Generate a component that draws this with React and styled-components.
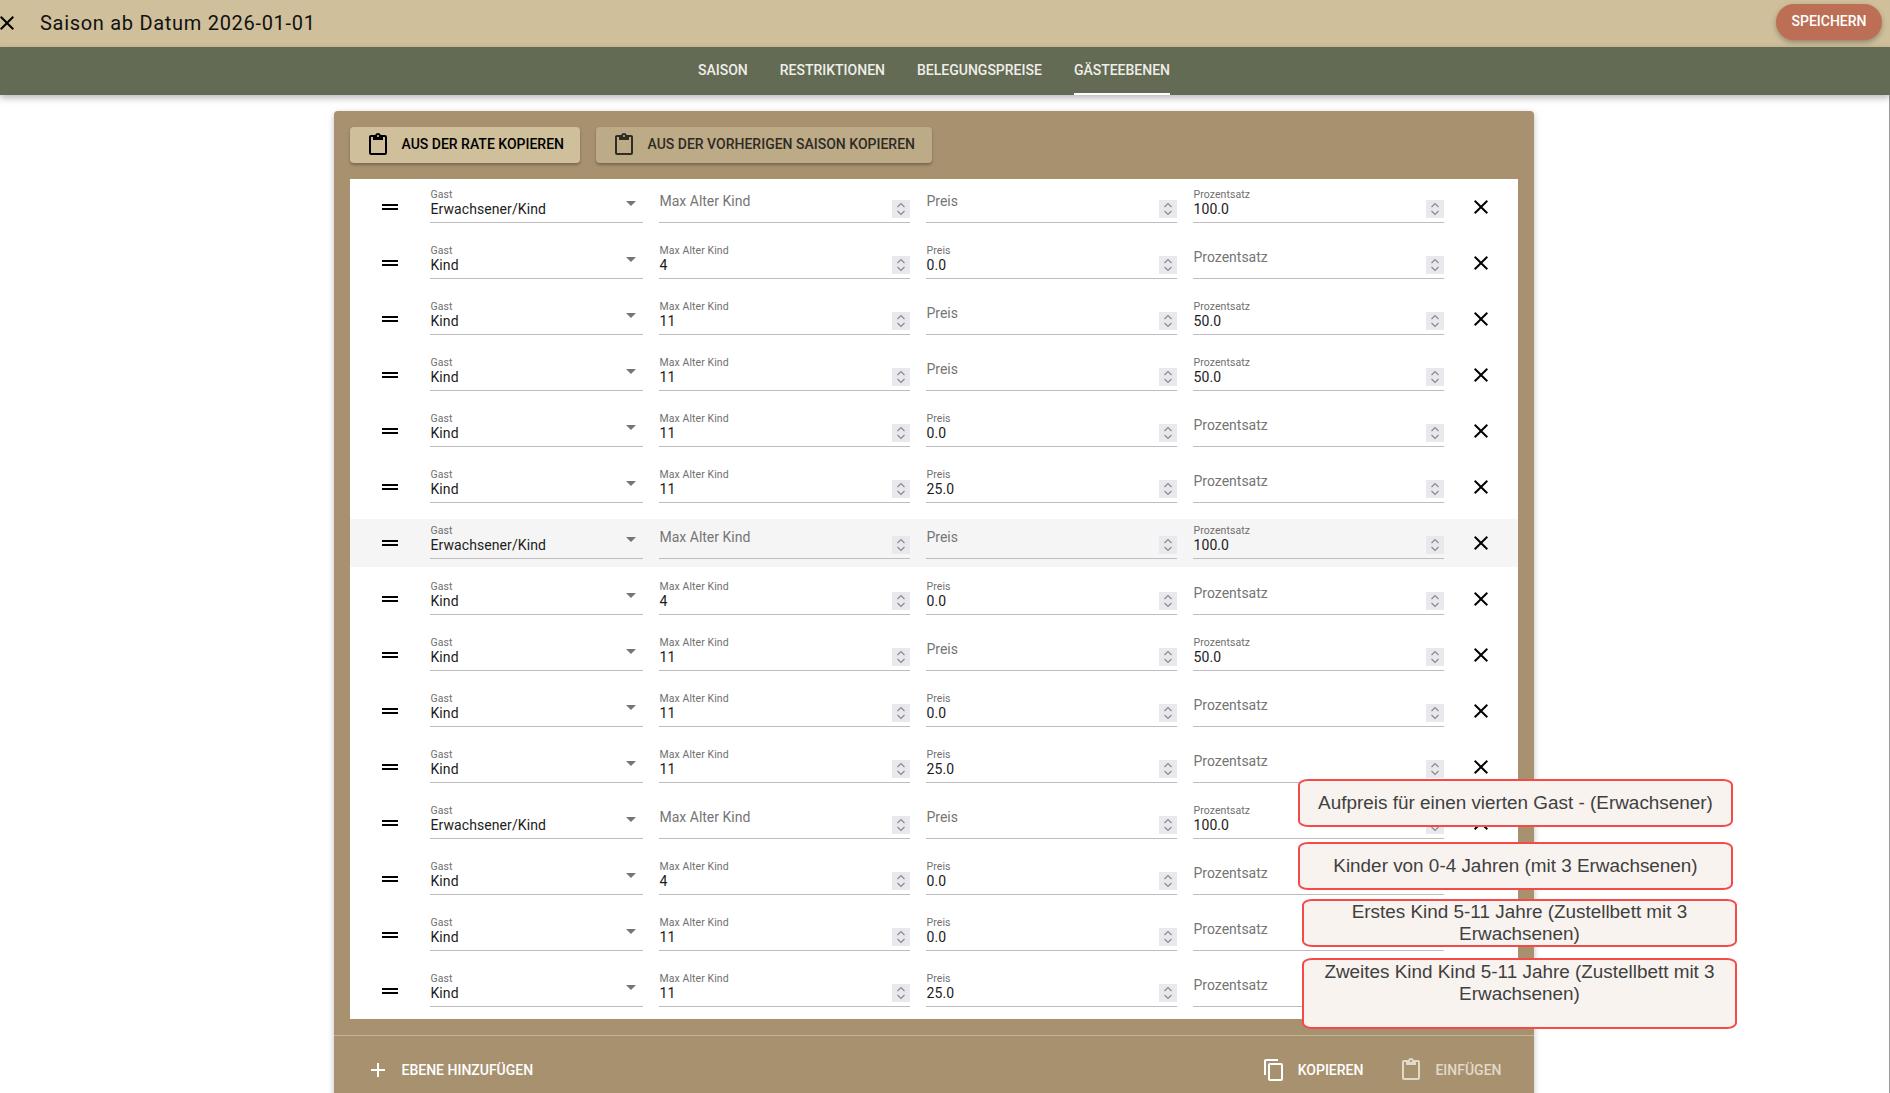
import React from "react";
import styled, { createGlobalStyle } from "styled-components";

const GlobalStyle = createGlobalStyle`
  html, body {
    margin: 0;
    padding: 0;
    height: 100%;
    overflow: hidden;
    background: #fff;
    font-family: Roboto, "Liberation Sans", sans-serif;
  }
`;

const Page = styled.div`
  height: 1093px;
  display: flex;
  flex-direction: column;
  overflow: hidden;
  position: relative;
`;

const Header = styled.header`
  height: 47px;
  flex: none;
  background: #cfbf9b;
  display: flex;
  align-items: center;
  justify-content: space-between;
  padding: 0 8px 0 0;
`;

const HeaderLeft = styled.div`
  display: flex;
  align-items: center;
  margin-bottom: 1px;
`;

const CloseTop = styled.span`
  width: 24px;
  height: 24px;
  margin-left: -5px;
  margin-right: 21px;
  display: flex;
  color: #000;
`;

const Title = styled.h1`
  margin: 0;
  font-size: 20px;
  font-weight: 400;
  letter-spacing: 0.7px;
  color: #111;
`;

const SaveButton = styled.button`
  width: 106px;
  height: 36px;
  margin-bottom: 3px;
  padding: 0 0 2px;
  border: none;
  border-radius: 18px;
  background: #bd6f55;
  color: #fff;
  font: 500 14px Roboto, sans-serif;
  box-shadow: 0 3px 5px -1px rgba(0, 0, 0, 0.2), 0 2px 6px 0 rgba(0, 0, 0, 0.14);
`;

const TabBar = styled.nav`
  height: 48px;
  flex: none;
  background: #636b55;
  display: flex;
  justify-content: center;
  gap: 32px;
  padding-right: 22px;
  box-shadow: 0 3px 7px rgba(0, 0, 0, 0.28);
  position: relative;
  z-index: 1;
`;

const Tab = styled.div`
  height: 48px;
  box-sizing: border-box;
  display: flex;
  align-items: center;
  font-size: 14px;
  font-weight: 500;
  color: #f0eee8;
  border-bottom: 2px solid ${(p) => (p.$active ? "#fff" : "transparent")};
`;

const Content = styled.main`
  flex: 1;
  min-height: 0;
  padding: 16px 22px 0 0;
  border-right: 1px solid #9a9a9a;
  box-sizing: border-box;
  width: 1890px;
  position: relative;
`;

const Panel = styled.section`
  width: 1200px;
  margin: 0 auto;
  padding: 16px 0 0;
  background: #a8916f;
  border-radius: 4px 4px 0 0;
  box-shadow: 0 2px 6px rgba(0, 0, 0, 0.25);
`;

const TopActions = styled.div`
  display: flex;
  gap: 16px;
  padding: 0 16px;
  height: 52px;
`;

const CopyButton = styled.button`
  height: 36px;
  border: none;
  border-radius: 4px;
  display: flex;
  align-items: center;
  gap: 12px;
  padding: 0 16px 1px;
  width: ${(p) => p.$w}px;
  background: ${(p) => (p.$muted ? "#bdab88" : "#cfbf9b")};
  color: ${(p) => (p.$muted ? "#2f2b25" : "#000")};
  font: 500 14px Roboto, sans-serif;
  white-space: nowrap;
  box-shadow: 0 2px 3px rgba(0, 0, 0, 0.28);
`;

const CopyLabel = styled.span`
  position: relative;
  top: -1px;
`;

const Card = styled.div`
  margin: 0 16px;
  background: #fff;
  border-radius: 4px;
`;

const Row = styled.div`
  height: 56px;
  display: flex;
  background: ${(p) => (p.$hover ? "linear-gradient(#fff 4px, #f5f5f5 4px, #f5f5f5 52px, #fff 52px)" : "#fff")};
`;

const Handle = styled.div`
  width: 80px;
  flex: none;
  display: flex;
  justify-content: center;
  padding-top: 16px;
  box-sizing: border-box;
  color: #000;
`;

const Field = styled.div`
  width: ${(p) => p.$w}px;
  flex: none;
  margin-right: 16px;
  height: 44px;
  box-sizing: border-box;
  border-bottom: 1.5px solid #bdbdbd;
  position: relative;
`;

const Label = styled.div`
  position: absolute;
  left: 1px;
  top: 10px;
  font-size: 10.5px;
  line-height: 12px;
  letter-spacing: 0.08px;
  color: #6f6f6f;
`;

const Value = styled.div`
  position: absolute;
  left: 1px;
  top: 21px;
  font-size: 14px;
  line-height: 18px;
  letter-spacing: 0.08px;
  color: #1c1c1c;
`;

const Placeholder = styled.div`
  position: absolute;
  left: 1px;
  top: 13px;
  font-size: 14px;
  line-height: 18px;
  color: #757575;
`;

const Arrow = styled.span`
  position: absolute;
  right: 7px;
  top: 22px;
  width: 0;
  height: 0;
  border-left: 5px solid transparent;
  border-right: 5px solid transparent;
  border-top: 5px solid #757575;
`;

const Spinner = styled.span`
  position: absolute;
  right: 0;
  top: 21px;
  width: 18px;
  height: 18px;
  background: #e9e9ed;
  display: flex;
`;

const RemoveCell = styled.div`
  width: 24px;
  height: 24px;
  margin: 16px 0 0 9px;
  color: #000;
`;

const Divider = styled.div`
  height: 1px;
  margin-top: 16px;
  background: #c4b497;
`;

const Footer = styled.footer`
  height: 67px;
  display: flex;
  align-items: center;
  justify-content: space-between;
  padding: 0 32px;
`;

const FooterGroup = styled.div`
  display: flex;
  align-items: center;
  gap: 36px;
`;

const FooterAction = styled.div`
  display: flex;
  align-items: center;
  gap: 12px;
  font-size: 14px;
  font-weight: 500;
  color: ${(p) => (p.$disabled ? "#e2d9c9" : "#fff")};
`;

const Note = styled.div`
  position: absolute;
  left: ${(p) => p.$x}px;
  top: ${(p) => p.$y}px;
  width: 435px;
  height: ${(p) => p.$h}px;
  box-sizing: border-box;
  padding: ${(p) => p.$pad}px 8px 0;
  background: #f8f3ef;
  border: 2px solid #f54a4a;
  border-radius: 10px / 6px;
  font-family: "Liberation Sans", Arial, sans-serif;
  font-size: 18.9px;
  line-height: 22px;
  text-align: center;
  color: #404040;
  z-index: 2;
`;

const Icon = ({ d, size = 24, color = "currentColor" }) => (
  <svg width={size} height={size} viewBox="0 0 24 24" fill={color} style={{ flex: "none" }}>
    <path d={d} />
  </svg>
);

const CLOSE = "M19 6.41 17.59 5 12 10.59 6.41 5 5 6.41 10.59 12 5 17.59 6.41 19 12 13.41 17.59 19 19 17.59 13.41 12z";
const PASTE =
  "M19 2h-4.18C14.4.84 13.3 0 12 0c-1.3 0-2.4.84-2.82 2H5c-1.1 0-2 .9-2 2v16c0 1.1.9 2 2 2h14c1.1 0 2-.9 2-2V4c0-1.1-.9-2-2-2zm-7 0c.55 0 1 .45 1 1s-.45 1-1 1-1-.45-1-1 .45-1 1-1zm7 18H5V4h2v3h10V4h2v16z";
const COPY =
  "M16 1H4c-1.1 0-2 .9-2 2v14h2V3h12V1zm3 4H8c-1.1 0-2 .9-2 2v14c0 1.1.9 2 2 2h11c1.1 0 2-.9 2-2V7c0-1.1-.9-2-2-2zm0 16H8V7h11v14z";
const DRAG = "M20 9H4v2h16V9zM4 15h16v-2H4v2z";
const PLUS = "M19 13h-6v6h-2v-6H5v-2h6V5h2v6h6v2z";

const rows = [
  ["Erwachsener/Kind", "", "", "100.0"],
  ["Kind", "4", "0.0", ""],
  ["Kind", "11", "", "50.0"],
  ["Kind", "11", "", "50.0"],
  ["Kind", "11", "0.0", ""],
  ["Kind", "11", "25.0", ""],
  ["Erwachsener/Kind", "", "", "100.0"],
  ["Kind", "4", "0.0", ""],
  ["Kind", "11", "", "50.0"],
  ["Kind", "11", "0.0", ""],
  ["Kind", "11", "25.0", ""],
  ["Erwachsener/Kind", "", "", "100.0"],
  ["Kind", "4", "0.0", ""],
  ["Kind", "11", "0.0", ""],
  ["Kind", "11", "25.0", ""],
];

const Stepper = () => (
  <Spinner>
    <svg width="18" height="18" viewBox="0 0 18 18" fill="none" stroke="#8a8a8e" strokeWidth="1.2">
      <path d="M5.5 7 9 3.5 12.5 7M5.5 11 9 14.5 12.5 11" />
    </svg>
  </Spinner>
);

const NumberField = ({ label, value, w }) => (
  <Field $w={w}>
    {value ? (
      <>
        <Label>{label}</Label>
        <Value>{value}</Value>
      </>
    ) : (
      <Placeholder>{label}</Placeholder>
    )}
    <Stepper />
  </Field>
);

export default function App() {
  return (
    <Page>
      <GlobalStyle />
      <Header>
        <HeaderLeft>
          <CloseTop>
            <Icon d={CLOSE} />
          </CloseTop>
          <Title>Saison ab Datum 2026-01-01</Title>
        </HeaderLeft>
        <SaveButton>SPEICHERN</SaveButton>
      </Header>
      <TabBar>
        <Tab>SAISON</Tab>
        <Tab>RESTRIKTIONEN</Tab>
        <Tab>BELEGUNGSPREISE</Tab>
        <Tab $active>GÄSTEEBENEN</Tab>
      </TabBar>
      <Content>
        <Panel>
          <TopActions>
            <CopyButton $w={230}>
              <Icon d={PASTE} />
              <CopyLabel>AUS DER RATE KOPIEREN</CopyLabel>
            </CopyButton>
            <CopyButton $w={336} $muted>
              <Icon d={PASTE} />
              <CopyLabel>AUS DER VORHERIGEN SAISON KOPIEREN</CopyLabel>
            </CopyButton>
          </TopActions>
          <Card>
            {rows.map((r, i) => (
              <Row key={i} $hover={i === 6}>
                <Handle>
                  <Icon d={DRAG} />
                </Handle>
                <Field $w={213}>
                  <Label>Gast</Label>
                  <Value>{r[0]}</Value>
                  <Arrow />
                </Field>
                <NumberField label="Max Alter Kind" value={r[1]} w={251} />
                <NumberField label="Preis" value={r[2]} w={251} />
                <NumberField label="Prozentsatz" value={r[3]} w={251} />
                <RemoveCell>
                  <Icon d={CLOSE} />
                </RemoveCell>
              </Row>
            ))}
          </Card>
          <Divider />
          <Footer>
            <FooterAction>
              <Icon d={PLUS} />
              EBENE HINZUFÜGEN
            </FooterAction>
            <FooterGroup>
              <FooterAction>
                <Icon d={COPY} />
                KOPIEREN
              </FooterAction>
              <FooterAction $disabled>
                <Icon d={PASTE} />
                EINFÜGEN
              </FooterAction>
            </FooterGroup>
          </Footer>
        </Panel>
      </Content>
      <Note $x={1298} $y={779} $h={48} $pad={11}>Aufpreis für einen vierten Gast - (Erwachsener)</Note>
      <Note $x={1298} $y={842} $h={48} $pad={11}>Kinder von 0-4 Jahren (mit 3 Erwachsenen)</Note>
      <Note $x={1302} $y={899} $h={48} $pad={0}>Erstes Kind 5-11 Jahre (Zustellbett mit 3 Erwachsenen)</Note>
      <Note $x={1302} $y={958} $h={71} $pad={1}>Zweites Kind Kind 5-11 Jahre (Zustellbett mit 3 Erwachsenen)</Note>
    </Page>
  );
}
